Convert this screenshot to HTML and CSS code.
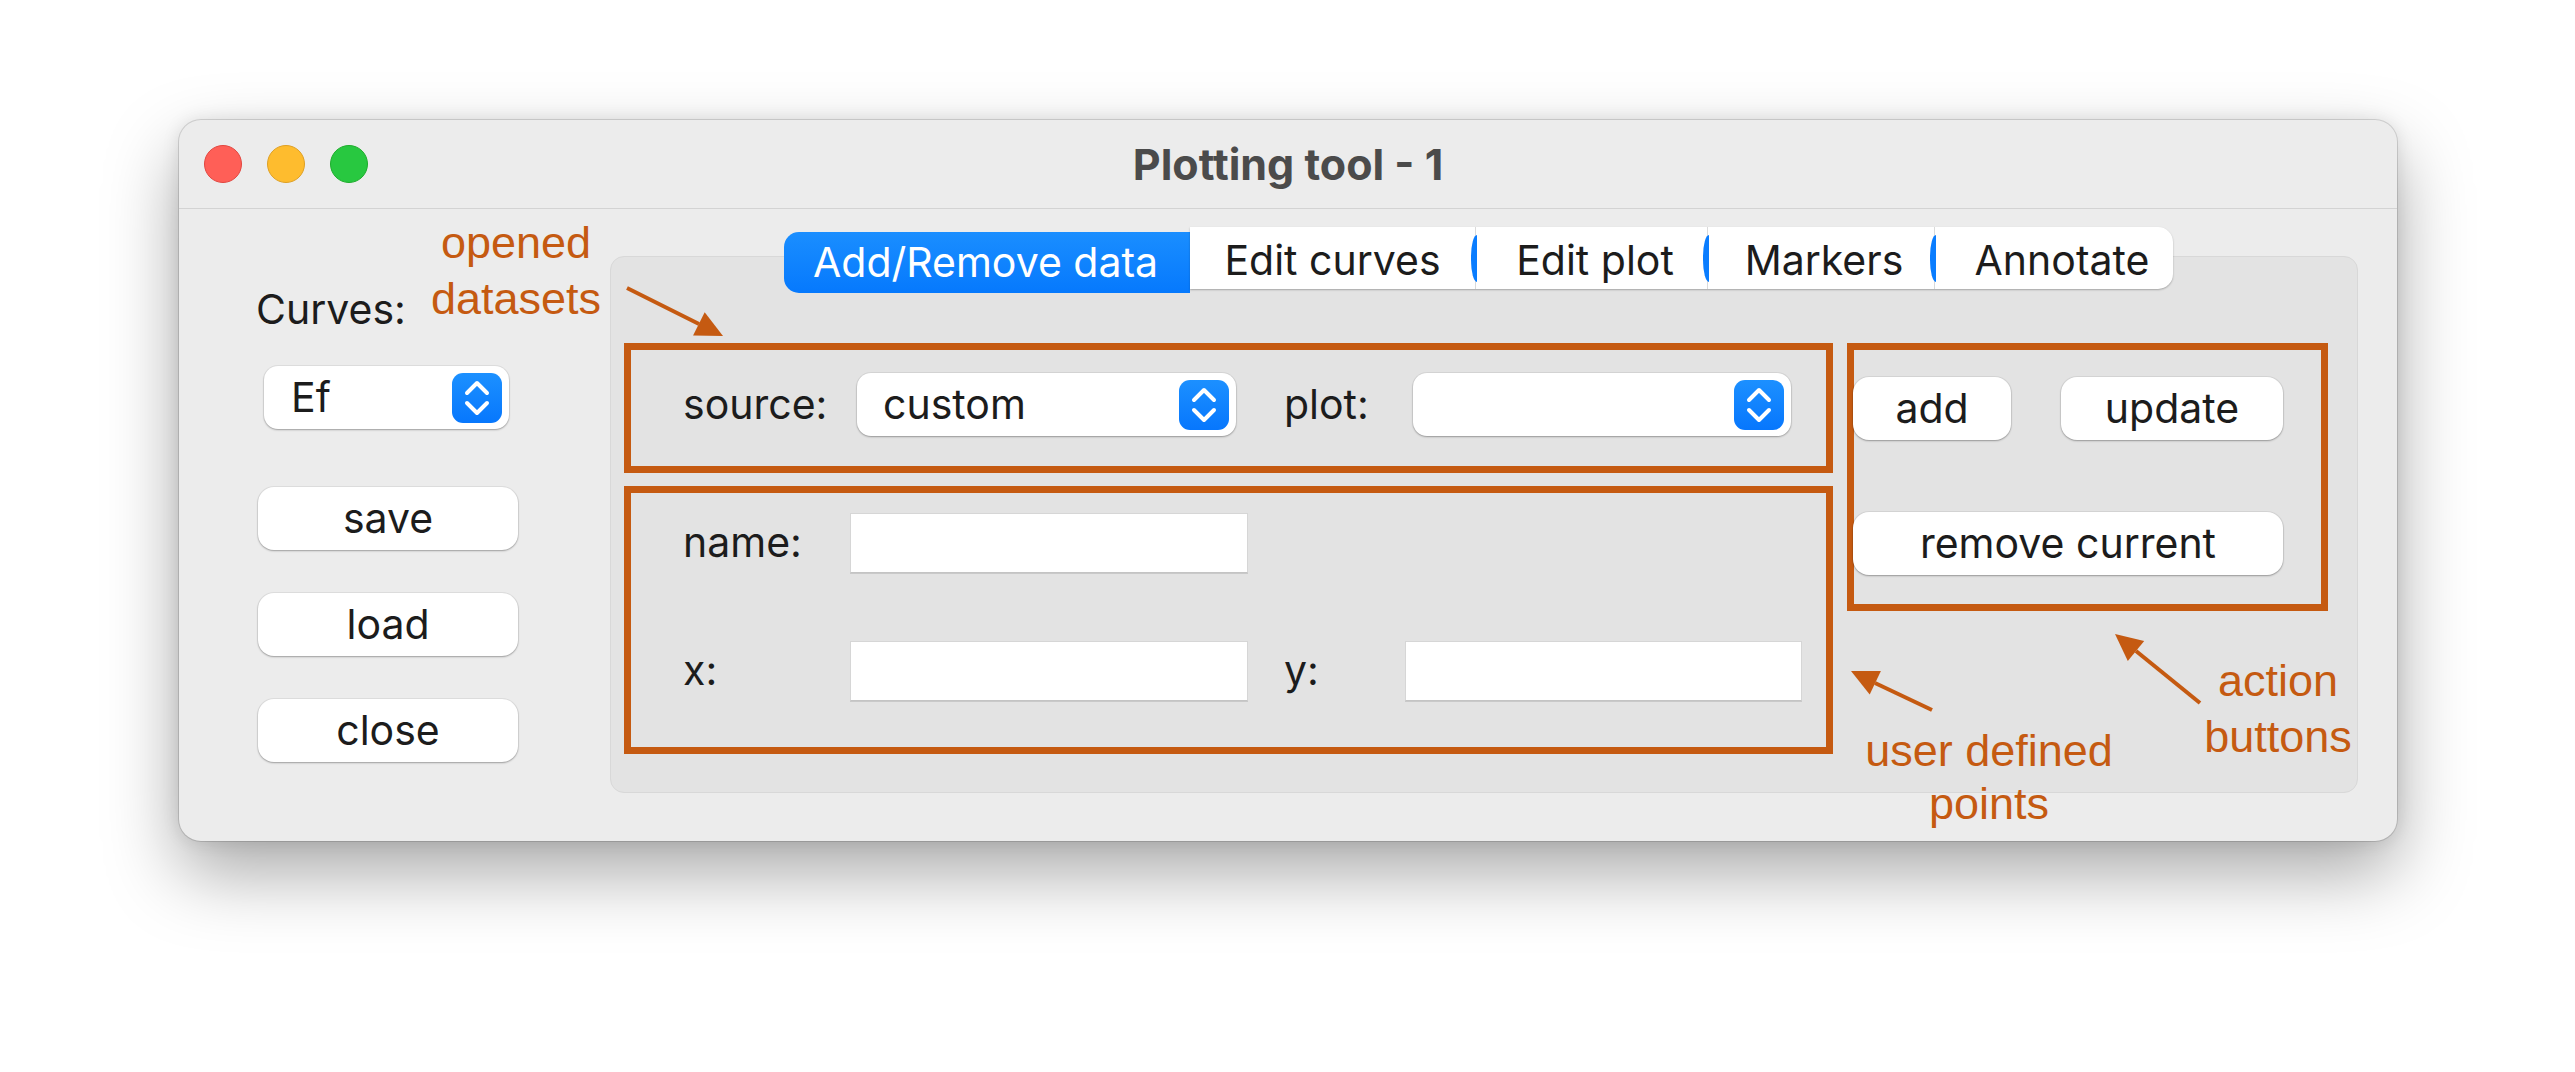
FILE: index.html
```html
<!DOCTYPE html>
<html>
<head>
<meta charset="utf-8">
<title>Plotting tool - 1</title>
<link rel="stylesheet" href="styles.css">
</head>
<body>
<div class="window">
  <div class="titlebar">
    <div class="lights">
      <span class="light red"></span>
      <span class="light yellow"></span>
      <span class="light green"></span>
    </div>
    <div class="title">Plotting tool - 1</div>
    <div></div>
  </div>
  <div class="main">
    <div class="sidebar">
      <div class="curves-label">Curves:</div>
      <div class="popup popup-ef">
        <span class="popup-text">Ef</span>
        <svg class="stepper" viewBox="0 0 50 50" width="50" height="50"><rect x="0" y="0" width="50" height="50" rx="11" fill="url(#g1)"/><defs><linearGradient id="g1" x1="0" y1="0" x2="0" y2="1"><stop offset="0" stop-color="#1c90ff"/><stop offset="1" stop-color="#0777fd"/></linearGradient></defs><path d="M15 20 L25 10 L35 20 M15 30 L25 40 L35 30" fill="none" stroke="#fff" stroke-width="4" stroke-linecap="round" stroke-linejoin="round"/></svg>
      </div>
      <div class="btn side-btn first">save</div>
      <div class="btn side-btn">load</div>
      <div class="btn side-btn">close</div>
    </div>
    <div class="notebook">
      <div class="tabs">
        <div class="tab-active">Add/Remove data</div>
        <div class="tab-group">
          <div class="tab tab-curves">Edit curves</div>
          <div class="tab tab-plot"><span class="tab-mark"></span>Edit plot</div>
          <div class="tab tab-markers"><span class="tab-mark"></span>Markers</div>
          <div class="tab tab-annotate"><span class="tab-mark"></span>Annotate</div>
        </div>
      </div>
      <div class="panel">
        <div class="panel-left">
          <div class="abox box-source">
            <span class="lbl lbl-source">source:</span>
            <div class="popup popup-custom">
              <span class="popup-text">custom</span>
              <svg class="stepper" viewBox="0 0 50 50" width="50" height="50"><rect x="0" y="0" width="50" height="50" rx="11" fill="url(#g2)"/><defs><linearGradient id="g2" x1="0" y1="0" x2="0" y2="1"><stop offset="0" stop-color="#1c90ff"/><stop offset="1" stop-color="#0777fd"/></linearGradient></defs><path d="M15 20 L25 10 L35 20 M15 30 L25 40 L35 30" fill="none" stroke="#fff" stroke-width="4" stroke-linecap="round" stroke-linejoin="round"/></svg>
            </div>
            <span class="lbl lbl-plot">plot:</span>
            <div class="popup popup-plot">
              <span class="popup-text"></span>
              <svg class="stepper" viewBox="0 0 50 50" width="50" height="50"><rect x="0" y="0" width="50" height="50" rx="11" fill="url(#g3)"/><defs><linearGradient id="g3" x1="0" y1="0" x2="0" y2="1"><stop offset="0" stop-color="#1c90ff"/><stop offset="1" stop-color="#0777fd"/></linearGradient></defs><path d="M15 20 L25 10 L35 20 M15 30 L25 40 L35 30" fill="none" stroke="#fff" stroke-width="4" stroke-linecap="round" stroke-linejoin="round"/></svg>
            </div>
          </div>
          <div class="abox box-points">
            <div class="row row-name">
              <span class="lbl lbl-first">name:</span>
              <div class="field field-left"></div>
            </div>
            <div class="row row-xy">
              <span class="lbl lbl-first">x:</span>
              <div class="field field-left"></div>
              <span class="lbl lbl-y">y:</span>
              <div class="field field-right"></div>
            </div>
          </div>
        </div>
        <div class="abox box-actions">
          <div class="act-row">
            <div class="btn btn-add">add</div>
            <div class="btn btn-update">update</div>
          </div>
          <div class="btn btn-remove">remove current</div>
        </div>
      </div>
    </div>
  </div>

  <div class="note note-opened">opened<br>datasets</div>
  <div class="note note-points">user defined<br>points</div>
  <div class="note note-actions">action<br>buttons</div>

  <svg class="arrows" width="2218" height="721" viewBox="0 0 2218 721">
    <g stroke="#c55a11" stroke-width="4" fill="none">
      <line x1="448" y1="168" x2="520" y2="204"/>
      <line x1="1753" y1="590" x2="1696" y2="563"/>
      <line x1="2021" y1="583" x2="1957" y2="531"/>
    </g>
    <g fill="#c55a11">
      <polygon points="544,216 514.1,215.5 525.7,192.3"/>
      <polygon points="1672,551 1701.9,551 1690.7,574.4"/>
      <polygon points="1936,514 1965.2,520.9 1948.8,541.1"/>
    </g>
  </svg>
</div>
</body>
</html>
```
FILE: styles.css
```css
* { box-sizing: border-box; }

html, body {
  margin: 0;
  padding: 0;
}

body {
  background: #ffffff;
  width: 2575px;
  height: 1072px;
  overflow: hidden;
  padding: 120px 0 0 179px;
  font-family: "Inter", "Liberation Sans", sans-serif;
  font-size: 41px;
  color: #1c1c1c;
}

.window {
  position: relative;
  width: 2218px;
  height: 721px;
  background: #ececec;
  border-radius: 22px;
  box-shadow: 0 0 0 1px rgba(0, 0, 0, 0.13),
              0 32px 72px rgba(0, 0, 0, 0.34),
              0 0 18px rgba(0, 0, 0, 0.10);
}

/* ---------- title bar ---------- */
.titlebar {
  height: 89px;
  border-bottom: 1px solid #d3d3d3;
  display: grid;
  grid-template-columns: 1fr auto 1fr;
  align-items: center;
}

.lights {
  display: flex;
  gap: 25px;
  padding-left: 25px;
}

.light {
  width: 38px;
  height: 38px;
  border-radius: 50%;
}
.red { background: #ff5f57; border: 1px solid #e2463f; }
.yellow { background: #febc2e; border: 1px solid #dfa023; }
.green { background: #28c840; border: 1px solid #1dad2b; }

.title {
  font-weight: 700;
  font-size: 43px;
  line-height: 1;
  color: #4b4b4b;
}

/* ---------- main ---------- */
.main {
  display: flex;
  height: 632px;
  padding: 0 39px 0 79px;
}

.sidebar {
  width: 260px;
  padding-top: 77px;
  display: flex;
  flex-direction: column;
}

.curves-label {
  line-height: 46px;
  margin-left: -2px;
}

/* popups */
.popup {
  display: flex;
  align-items: center;
  justify-content: space-between;
  height: 63px;
  background: #ffffff;
  border-radius: 14px;
  box-shadow: 0 1px 2px rgba(0, 0, 0, 0.30), 0 0 0 1px rgba(0, 0, 0, 0.05);
  padding: 0 7px 0 27px;
}

.popup-text {
  line-height: 1;
}

.stepper {
  display: block;
  flex: none;
}

.popup-ef {
  margin-top: 34px;
  margin-left: 6px;
  width: 245px;
}

/* buttons */
.btn {
  display: flex;
  align-items: center;
  justify-content: center;
  height: 63px;
  background: #ffffff;
  border-radius: 16px;
  box-shadow: 0 1px 2px rgba(0, 0, 0, 0.30), 0 0 0 1px rgba(0, 0, 0, 0.05);
  line-height: 1;
}

.side-btn {
  width: 260px;
  margin-top: 43px;
}
.side-btn.first { margin-top: 58px; }

/* ---------- notebook ---------- */
.notebook {
  margin-left: 92px;
  width: 1748px;
  padding-top: 18px;
  display: flex;
  flex-direction: column;
}

.tabs {
  position: relative;
  z-index: 2;
  display: flex;
  align-items: flex-start;
  height: 66px;
  padding-left: 174px;
}

.tab-active {
  margin-top: 5px;
  width: 406px;
  height: 61px;
  line-height: 61px;
  padding-left: 29px;
  color: #ffffff;
  background: linear-gradient(180deg, #1a8eff 0%, #0679fd 100%);
  border-radius: 15px 0 0 15px;
}

.tab-group {
  display: flex;
  height: 62px;
  background: #ffffff;
  border-radius: 0 15px 15px 0;
  box-shadow: 0 1px 2px rgba(0, 0, 0, 0.28);
}

.tab {
  position: relative;
  height: 62px;
  padding-top: 4px;
  line-height: 58px;
  text-align: center;
}
.tab + .tab { border-left: 1px solid #dadada; }

.tab-curves { width: 285px; }
.tab-plot { width: 232px; padding-left: 7px; }
.tab-markers { width: 227px; padding-left: 6px; }
.tab-annotate { width: 239px; padding-left: 16px; }

.tab-mark {
  position: absolute;
  left: -5px;
  top: 8px;
  width: 6px;
  height: 47px;
  background: #0a7dff;
  border-radius: 6px 0 0 6px / 22px 0 0 22px;
}

.panel {
  margin-top: -37px;
  height: 537px;
  background: #e3e3e3;
  border: 1px solid #d8d8d8;
  border-radius: 14px;
  padding: 86px 29px 0 13px;
  display: flex;
  gap: 14px;
  align-items: flex-start;
}

.panel-left {
  width: 1209px;
  display: flex;
  flex-direction: column;
  gap: 13px;
}

.abox {
  border: 7px solid #c55a11;
}

.box-source {
  height: 130px;
  display: flex;
  align-items: center;
  padding: 0 0 7px 52px;
}

.lbl { line-height: 1; }
.lbl-source { width: 174px; }
.popup-custom { width: 379px; padding-left: 26px; }
.lbl-plot { width: 129px; margin-left: 48px; }
.popup-plot { width: 378px; }

.box-points {
  height: 268px;
  padding: 19px 0 0 52px;
}

.row {
  display: flex;
  align-items: center;
  height: 61px;
}
.row-xy { margin-top: 67px; }

.lbl-first { width: 167px; }
.lbl-y { width: 121px; margin-left: 36px; }

.field {
  height: 60px;
  background: #ffffff;
  border: 1px solid #d6d6d6;
  border-bottom-color: #c4c4c4;
  box-shadow: 0 1px 0 #c9c9c9;
}
.field-left { width: 398px; }
.field-right { width: 397px; }

.box-actions {
  width: 481px;
  height: 268px;
  padding-top: 27px;
  display: flex;
  flex-direction: column;
}

.act-row {
  display: flex;
  gap: 50px;
  margin-left: -1px;
}
.btn-add { width: 158px; }
.btn-update { width: 222px; }
.btn-remove {
  width: 430px;
  margin-top: 72px;
  margin-left: -1px;
}

/* ---------- annotations ---------- */
.note {
  position: absolute;
  font-family: "Liberation Sans", Arial, sans-serif;
  font-size: 45px;
  color: #c55a11;
  text-align: center;
  line-height: 56px;
  white-space: nowrap;
}
.note-opened { left: 237px; top: 95px; width: 200px; }
.note-points { left: 1660px; top: 604px; width: 300px; line-height: 53px; }
.note-actions { left: 1979px; top: 533px; width: 240px; }

.arrows {
  position: absolute;
  left: 0;
  top: 0;
  pointer-events: none;
  overflow: visible;
}
```
